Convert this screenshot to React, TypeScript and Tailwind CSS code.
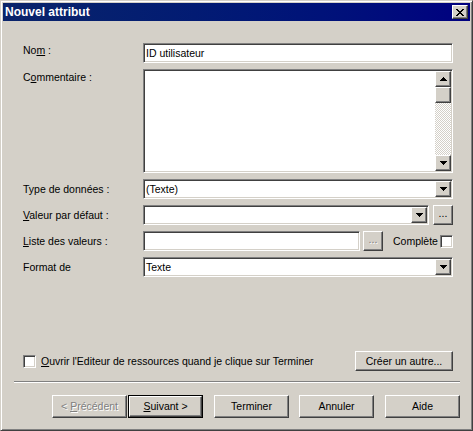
const sunken =
  "border border-t-[#808080] border-l-[#808080] border-r-white border-b-white shadow-[inset_1px_1px_0_#404040,inset_-1px_-1px_0_#d4d0c8]";
const raised =
  "border border-t-white border-l-white border-r-[#404040] border-b-[#404040] shadow-[inset_-1px_-1px_0_#808080,inset_1px_1px_0_#d4d0c8] bg-[#d4d0c8]";
const disabled = "text-[#808080] [text-shadow:1px_1px_0_#ffffff]";

const DownArrow = () => (
  <svg width="7" height="4" viewBox="0 0 7 4" shapeRendering="crispEdges">
    <path d="M0 0h7v1H0zM1 1h5v1H1zM2 2h3v1H2zM3 3h1v1H3z" fill="#000" />
  </svg>
);

const UpArrow = () => (
  <svg width="7" height="4" viewBox="0 0 7 4" shapeRendering="crispEdges">
    <path d="M3 0h1v1H3zM2 1h3v1H2zM1 2h5v1H1zM0 3h7v1H0z" fill="#000" />
  </svg>
);

const CloseGlyph = () => (
  <svg width="8" height="7" viewBox="0 0 8 7" shapeRendering="crispEdges">
    <path
      d="M0 0h2v1H0zM6 0h2v1H6zM1 1h2v1H1zM5 1h2v1H5zM2 2h4v1H2zM3 3h2v1H3zM2 4h4v1H2zM1 5h2v1H1zM5 5h2v1H5zM0 6h2v1H0zM6 6h2v1H6z"
      fill="#000"
    />
  </svg>
);

const Select = ({ value, width }: { value: string; width: string }) => (
  <div className={`${sunken} bg-white p-[1px] h-[20px] flex ${width}`}>
    <div className="flex-1 flex items-center pl-[1px]">{value}</div>
    <div className={`${raised} w-[16px] h-full flex items-center justify-center`}>
      <DownArrow />
    </div>
  </div>
);

const Checkbox = () => <div className={`${sunken} bg-white w-[13px] h-[13px] shrink-0`} />;

const Button = ({ children, className = "" }: { children: React.ReactNode; className?: string }) => (
  <div className={`${raised} w-[75px] h-[23px] flex items-center justify-center ${className}`}>
    {children}
  </div>
);

export default function App() {
  return (
    <div className="w-[473px] h-[431px] bg-[#d4d0c8] border border-t-[#d4d0c8] border-l-[#d4d0c8] border-r-[#404040] border-b-[#404040] shadow-[inset_1px_1px_0_#ffffff,inset_-1px_-1px_0_#808080] p-[2px] font-['Liberation_Sans',Arial,sans-serif] text-[10.5px] leading-[13px] text-black select-none">
      {/* title bar */}
      <div className="h-[18px] flex items-center bg-linear-to-r from-[#0a246a] to-[#000080] pl-[2px] pr-[2px]">
        <span className="text-white font-bold text-[12px]">Nouvel attribut</span>
        <div className={`${raised} ml-auto w-[16px] h-[14px] flex items-center justify-center`}>
          <CloseGlyph />
        </div>
      </div>

      <div className="pl-[20px]">
        {/* Nom */}
        <div className="mt-[22px] flex h-[20px] w-[430px]">
          <div className="w-[120px] pt-[1px]">
            No<span className="underline">m</span> :
          </div>
          <div className={`${sunken} bg-white p-[1px] w-[310px] h-[20px] flex items-center pl-[2px]`}>
            ID utilisateur
          </div>
        </div>

        {/* Commentaire */}
        <div className="mt-[6px] flex h-[104px] w-[430px]">
          <div className="w-[120px] pt-[2px]">
            C<span className="underline">o</span>mmentaire :
          </div>
          <div className={`${sunken} bg-white p-[1px] w-[310px] h-[104px] flex justify-end`}>
            <div className="w-[16px] h-full flex flex-col">
              <div className={`${raised} h-[16px] flex items-center justify-center`}>
                <UpArrow />
              </div>
              <div className={`${raised} h-[16px]`} />
              <div className="flex-1 bg-[repeating-conic-gradient(#ffffff_0%_25%,#d4d0c8_0%_50%)] bg-[length:2px_2px]" />
              <div className={`${raised} h-[16px] flex items-center justify-center`}>
                <DownArrow />
              </div>
            </div>
          </div>
        </div>

        {/* Type de données */}
        <div className="mt-[6px] flex items-center h-[20px] w-[430px]">
          <div className="w-[120px]">Type de données :</div>
          <Select value="(Texte)" width="w-[310px]" />
        </div>

        {/* Valeur par défaut */}
        <div className="mt-[6px] flex items-center h-[20px] w-[430px]">
          <div className="w-[120px]">
            <span className="underline">V</span>aleur par défaut :
          </div>
          <Select value="" width="w-[286px]" />
          <div className={`${raised} ml-[4px] w-[20px] h-[20px] flex items-end justify-center pb-[4px]`}>
            ...
          </div>
        </div>

        {/* Liste des valeurs */}
        <div className="mt-[6px] flex items-center h-[20px] w-[430px]">
          <div className="w-[120px]">
            <span className="underline">L</span>iste des valeurs :
          </div>
          <div className={`${sunken} bg-white w-[217px] h-[20px]`} />
          <div
            className={`${raised} ${disabled} ml-[3px] w-[20px] h-[20px] flex items-end justify-center pb-[4px]`}
          >
            ...
          </div>
          <div className="ml-[10px]">Complète</div>
          <div className="ml-auto">
            <Checkbox />
          </div>
        </div>

        {/* Format de */}
        <div className="mt-[6px] flex items-center h-[20px] w-[430px]">
          <div className="w-[120px]">Format de</div>
          <Select value="Texte" width="w-[310px]" />
        </div>

        {/* option */}
        <div className="mt-[74px] flex items-center h-[20px] w-[430px]">
          <Checkbox />
          <div className="ml-[5px]">
            <span className="underline">O</span>uvrir l'Editeur de ressources quand je clique sur Terminer
          </div>
          <div className={`${raised} ml-auto w-[98px] h-[20px] flex items-center justify-center`}>
            Créer un autre...
          </div>
        </div>
      </div>

      {/* separator */}
      <div className="mt-[10px] ml-[11px] w-[446px] h-[2px] border-t border-t-[#808080] border-b border-b-white" />

      {/* buttons */}
      <div className="mt-[12px] flex justify-end pr-[10px]">
        <Button className={disabled}>
          &lt; <span className="underline ml-[3px]">P</span>récédent
        </Button>
        <div className="ml-[1px] w-[75px] h-[23px] border border-black">
          <div className={`${raised} w-full h-full flex items-center justify-center`}>
            <span className="underline">S</span>uivant &gt;
          </div>
        </div>
        <Button className="ml-[11px]">Terminer</Button>
        <Button className="ml-[10px]">Annuler</Button>
        <Button className="ml-[11px]">Aide</Button>
      </div>
    </div>
  );
}
